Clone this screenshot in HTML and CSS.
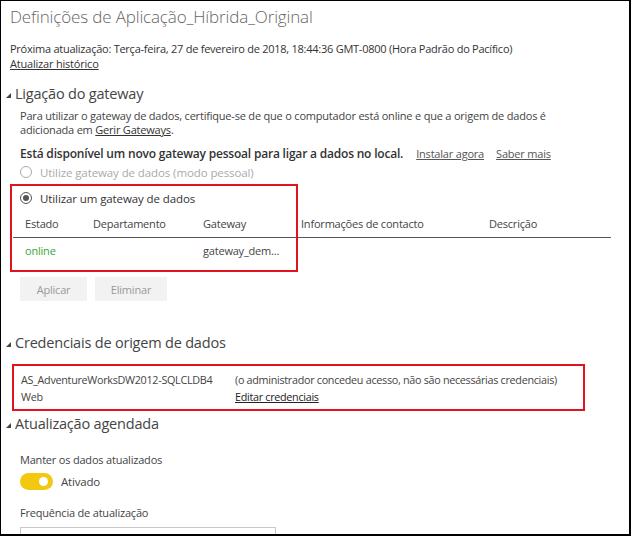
FILE: index.html
```html
<!DOCTYPE html>
<html lang="pt">
<head>
<meta charset="utf-8">
<link rel="stylesheet" href="styles.css">
</head>
<body>
<div class="frame">
  <h1 class="title">Definições de Aplicação_Híbrida_Original</h1>
  <div class="next">Próxima atualização: Terça-feira, 27 de fevereiro de 2018, 18:44:36 GMT-0800 (Hora Padrão do Pacífico)</div>
  <a class="link hist">Atualizar histórico</a>

  <h2 class="section s1"><span class="tri"></span>Ligação do gateway</h2>
  <p class="desc">Para utilizar o gateway de dados, certifique-se de que o computador está online e que a origem de dados é adicionada em <a class="link">Gerir Gateways</a>.</p>
  <div class="notice"><b>Está disponível um novo gateway pessoal para ligar a dados no local.</b><a class="link small">Instalar agora</a><a class="link small">Saber mais</a></div>
  <div class="radio disabled"><span class="circle"></span>Utilize gateway de dados (modo pessoal)</div>

  <div class="gwwrap">
    <div class="redbox box1"></div>
    <div class="radio checked"><span class="circle"><span class="dot"></span></span>Utilizar um gateway de dados</div>
    <div class="table">
      <div class="row head">
        <span class="c1">Estado</span><span class="c2">Departamento</span><span class="c3">Gateway</span><span class="c4">Informações de contacto</span><span class="c5">Descrição</span>
      </div>
      <div class="row body">
        <span class="c1 online">online</span><span class="c2"></span><span class="c3">gateway_dem...</span><span class="c4"></span><span class="c5"></span>
      </div>
    </div>
  </div>
  <div class="buttons"><button class="btn b1">Aplicar</button><button class="btn b2">Eliminar</button></div>

  <h2 class="section s2"><span class="tri"></span>Credenciais de origem de dados</h2>
  <div class="creds">
    <div class="credcol">
      <div>AS_AdventureWorksDW2012-SQLCLDB4</div>
      <div>Web</div>
    </div>
    <div class="credcol">
      <div>(o administrador concedeu acesso, não são necessárias credenciais)</div>
      <div><a class="link dark">Editar credenciais</a></div>
    </div>
  </div>

  <h2 class="section s3"><span class="tri"></span>Atualização agendada</h2>
  <div class="label l1">Manter os dados atualizados</div>
  <div class="toggle-row"><span class="toggle"><span class="knob"></span></span>Ativado</div>
  <div class="label l2">Frequência de atualização</div>
  <div class="select">Diário</div>
</div>
</body>
</html>
```

FILE: styles.css
```css
* { box-sizing: border-box; }
html, body { margin: 0; padding: 0; background: #fff; }
body { font-family: "Open Sans", "Noto Sans", sans-serif; color: #333; }
.frame {
  width: 631px; height: 536px; overflow: hidden;
  border-left: 1px solid #000; border-top: 1px solid #000;
  border-right: 2px solid #000; border-bottom: 2px solid #000;
  padding: 0 0 0 9px;
  font-size: 11px;
}
.title {
  margin: 0; padding-top: 4px;
  font-size: 17px; font-weight: 300; color: #666; line-height: 24px;
  letter-spacing: -0.15px;
}
.next { margin-top: 13px; line-height: 14px; color: #333; letter-spacing: -0.25px; }
.link { text-decoration: underline; color: #333; cursor: pointer; }
.hist { display: inline-block; line-height: 14px; letter-spacing: -0.2px; }
.section {
  margin: 0; font-weight: 400; font-size: 14.5px; color: #444;
  line-height: 20px; display: flex; align-items: center;
  margin-left: -4px; letter-spacing: -0.2px;
}
.tri {
  display: inline-block; width: 0; height: 0;
  border-left: 5px solid transparent; border-bottom: 5px solid #444;
  margin-right: 4px; margin-top: 3px;
}
.s1 { margin-top: 13px; }
.desc { margin: 5px 0 0 10px; width: 560px; line-height: 14px; color: #444; letter-spacing: -0.2px; }
.notice { margin: 9px 0 0 10px; display: flex; align-items: baseline; line-height: 16px; letter-spacing: -0.2px; }
.notice b { font-weight: 600; color: #333; font-size: 12px; }
.small { margin-left: 13px; color: #555; font-size: 11px; }
.small + .small { margin-left: 12px; }
.radio { display: flex; align-items: center; margin-left: 10px; height: 18px; letter-spacing: -0.1px; font-size: 11.5px; }
.radio.disabled { color: #aaa; margin-top: 1px; }
.circle {
  width: 12px; height: 12px; border-radius: 50%;
  border: 1px solid #aaa; margin-right: 8px;
  display: flex; align-items: center; justify-content: center;
}
.checked { color: #333; }
.checked .circle { border: 1.5px solid #555; }
.dot { width: 6px; height: 6px; border-radius: 50%; background: #555; }
.gwwrap { position: relative; margin-top: 5px; padding-top: 3px; }
.redbox { position: absolute; border: 2px solid #e0141e; pointer-events: none; }
.box1 { left: 0; top: -2px; width: 288px; height: 88px; }
.table { margin-left: 3px; width: 598px; }
.row { display: flex; line-height: 14px; letter-spacing: -0.2px; font-size: 11px; }
.row span { display: block; }
.row.head { padding: 10px 0 6px 0; border-bottom: 1px solid #555; color: #444; }
.row.body { padding: 6px 0 0 0; color: #444; }
.c1 { width: 80px; padding-left: 12px; }
.c2 { width: 110px; }
.c3 { width: 98px; }
.c4 { width: 188px; }
.c5 { width: 100px; }
.online { color: #3aa335; }
.buttons { display: flex; gap: 8px; margin: 19px 0 0 10px; }
.btn {
  border: 0; background: #f2f2f2; color: #999; font: inherit; font-size: 11px;
  height: 24px; padding: 0; letter-spacing: -0.2px;
}
.b1 { width: 67px; }
.b2 { width: 72px; }
.s2 { margin-top: 32px; }
.creds {
  display: flex; margin: 11px 0 0 2px; width: 573px; height: 47px;
  border: 2px solid #e0141e; padding: 5px 0 0 7px;
  line-height: 17px; color: #444; letter-spacing: -0.3px; font-size: 10.8px;
}
.credcol:first-child { width: 214px; }
.dark { color: #222; }
.s3 { margin-top: 3px; }
.label { margin-left: 10px; color: #444; letter-spacing: -0.2px; font-size: 11px; line-height: 14px; }
.l1 { margin-top: 19px; }
.toggle-row { display: flex; align-items: center; margin: 6px 0 0 10px; font-size: 11.5px; color: #444; letter-spacing: -0.2px; }
.toggle {
  width: 33px; height: 17px; border-radius: 9px; background: #f2c811;
  display: flex; align-items: center; justify-content: flex-end; padding-right: 5px;
  margin-right: 8px;
}
.knob { width: 9px; height: 9px; border-radius: 50%; background: #fff; }
.l2 { margin-top: 16px; }
.select {
  margin: 7px 0 0 10px; width: 256px; height: 26px; border: 1px solid #c8c8c8;
  padding: 6px 8px; font-size: 11px; color: #333; line-height: 14px;
}
```
